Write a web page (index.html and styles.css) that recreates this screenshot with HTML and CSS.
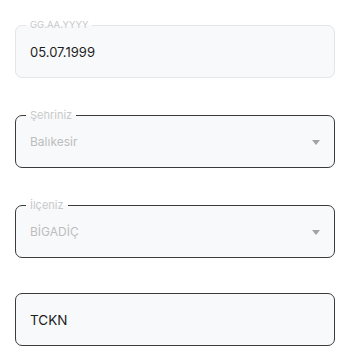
FILE: index.html
```html
<!DOCTYPE html>
<html lang="tr">
<head>
<meta charset="utf-8">
<link rel="stylesheet" href="styles.css">
</head>
<body>
<form class="form">
  <fieldset class="field field-light">
    <legend class="label label-small">GG.AA.YYYY</legend>
    <div class="value value-dark">05.07.1999</div>
  </fieldset>
  <fieldset class="field field-dark">
    <legend class="label">Şehriniz</legend>
    <div class="select">
      <span class="value value-muted">Balıkesir</span>
      <span class="caret"></span>
    </div>
  </fieldset>
  <fieldset class="field field-dark">
    <legend class="label">İlçeniz</legend>
    <div class="select">
      <span class="value value-muted">BİGADİÇ</span>
      <span class="caret"></span>
    </div>
  </fieldset>
  <fieldset class="field field-dark field-plain">
    <div class="value value-dark value-tckn">TCKN</div>
  </fieldset>
</form>
</body>
</html>
```

FILE: styles.css
```css
html, body {
  margin: 0;
  padding: 0;
  background: #ffffff;
}
body {
  font-family: Inter, "Noto Sans", "Liberation Sans", sans-serif;
}
.form {
  display: flex;
  flex-direction: column;
  gap: 31px;
  padding: 19px 15px 0 15px;
}
.field {
  margin: 0;
  min-width: 0;
  padding: 11px 14px 15px 14px;
  border-radius: 7px;
  background: #f8f9fb;
}
.field-light {
  border: 1px solid #e3e5e9;
}
.field-dark {
  border: 1px solid #3c3c3c;
}
.field-plain {
  padding-top: 16px;
  padding-bottom: 15px;
  margin-top: 4px;
}
.label {
  padding: 0 4px;
  margin-left: -4px;
  font-size: 11px;
  line-height: 12px;
  color: #c9c9c9;
}
.label-small {
  font-size: 9.5px;
}
.value {
  display: block;
  line-height: 20px;
}
.value-dark {
  font-size: 13px;
  color: #1e1e1e;
}
.value-muted {
  font-size: 12px;
  color: #bdbdbd;
}
.value-tckn {
  font-size: 13.5px;
}
.select {
  display: flex;
  align-items: center;
  justify-content: space-between;
}
.caret {
  width: 0;
  height: 0;
  margin-right: 0;
  border-left: 4.5px solid transparent;
  border-right: 4.5px solid transparent;
  border-top: 5px solid #a3a3a3;
}
```
